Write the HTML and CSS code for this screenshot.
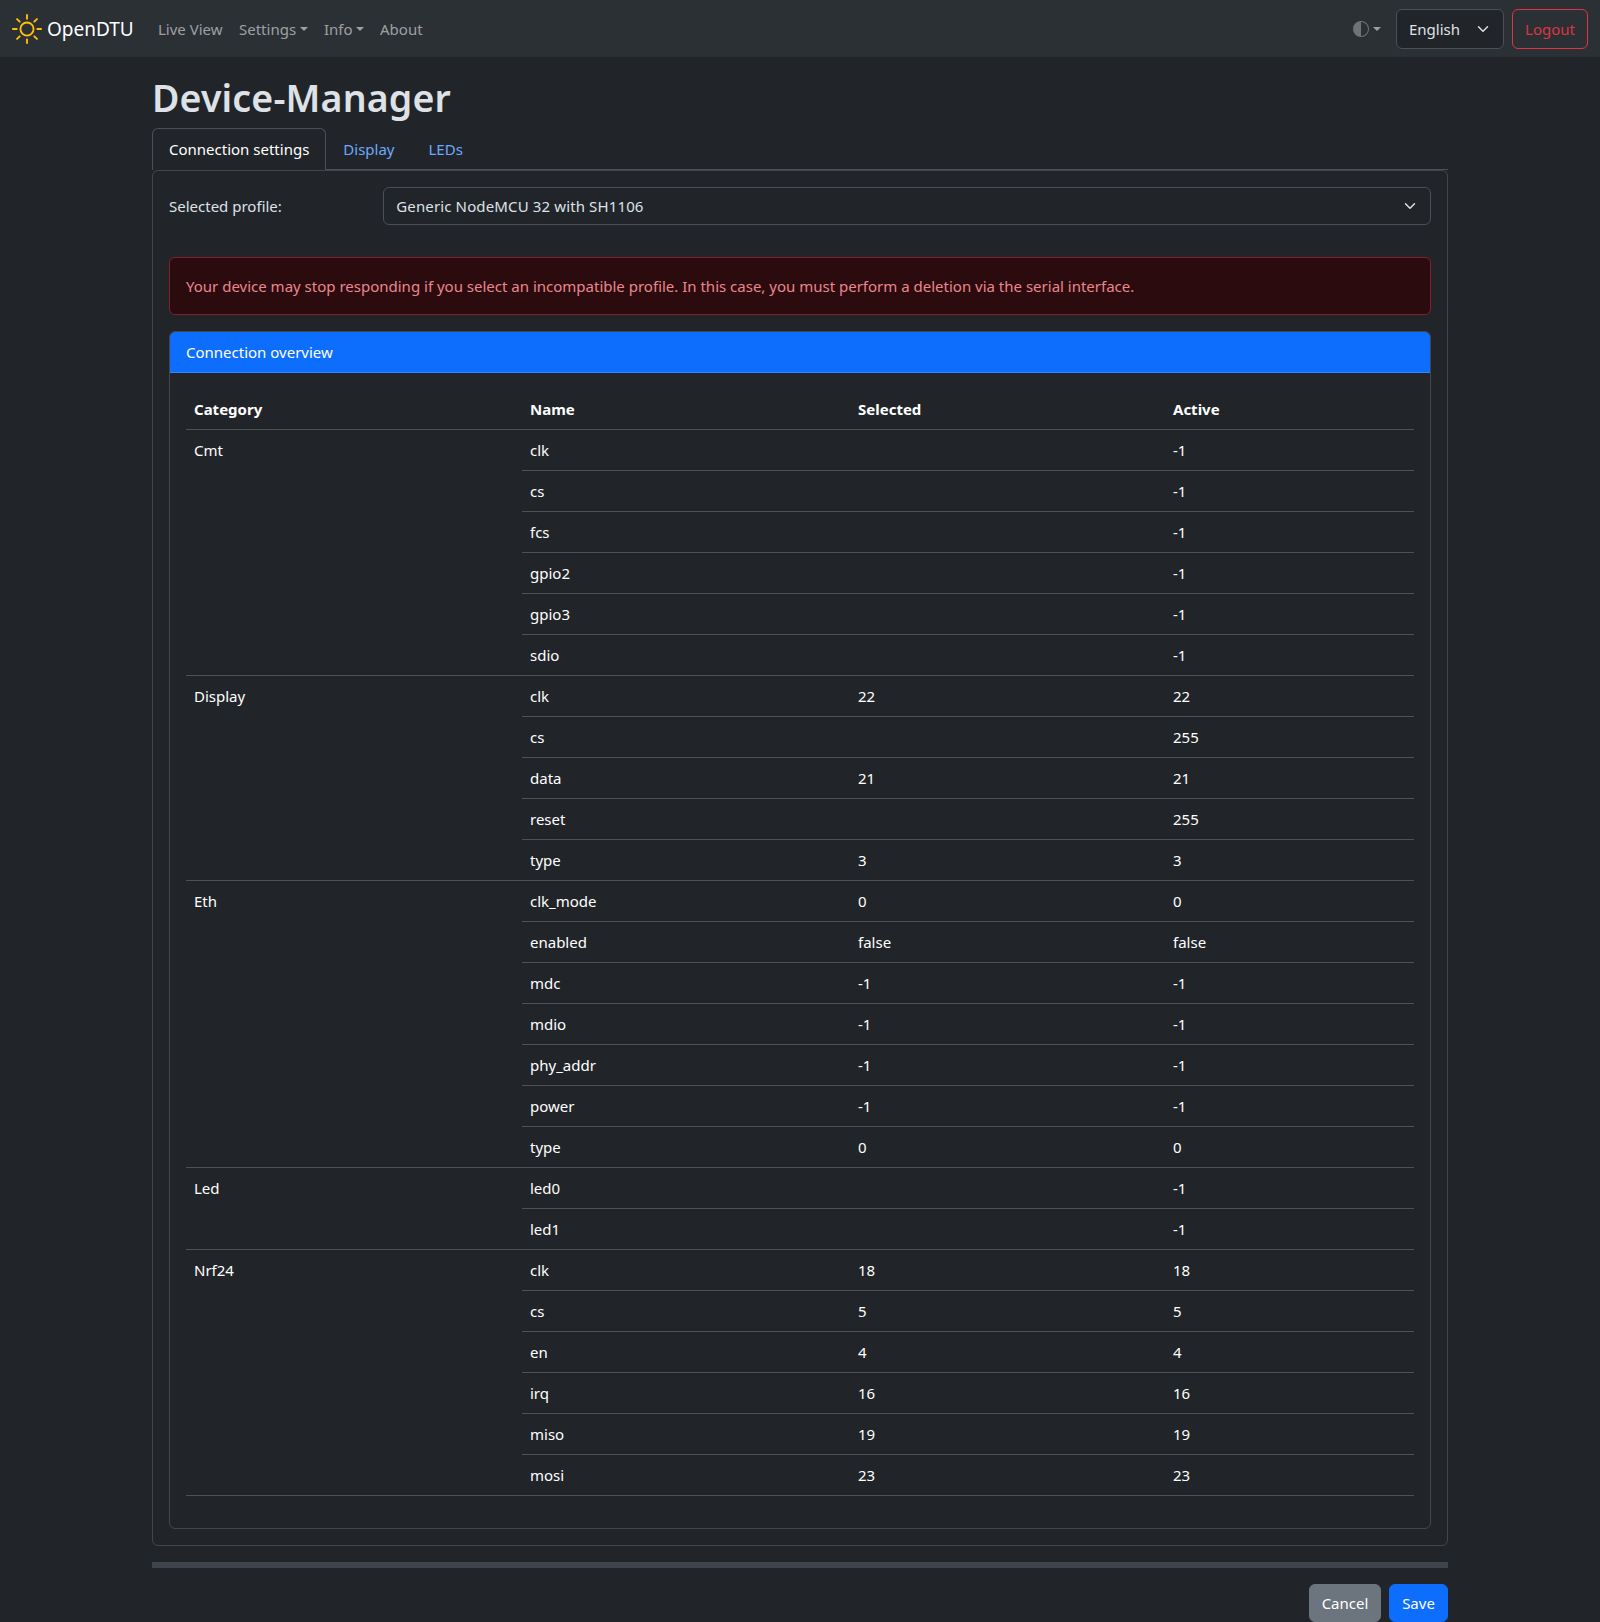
FILE: index.html
```html
<!DOCTYPE html>
<html lang="en">
<head>
<meta charset="utf-8">
<title>OpenDTU</title>
<link rel="stylesheet" href="styles.css">
</head>
<body>
<nav class="navbar">
  <a class="brand">
    <svg class="brand-icon" viewBox="0 0 16 16" width="30" height="30" fill="currentColor"><path d="M8 11a3 3 0 1 1 0-6 3 3 0 0 1 0 6m0 1a4 4 0 1 0 0-8 4 4 0 0 0 0 8M8 0a.5.5 0 0 1 .5.5v2a.5.5 0 0 1-1 0v-2A.5.5 0 0 1 8 0m0 13a.5.5 0 0 1 .5.5v2a.5.5 0 0 1-1 0v-2A.5.5 0 0 1 8 13m8-5a.5.5 0 0 1-.5.5h-2a.5.5 0 0 1 0-1h2a.5.5 0 0 1 .5.5M3 8a.5.5 0 0 1-.5.5h-2a.5.5 0 0 1 0-1h2A.5.5 0 0 1 3 8m10.657-5.657a.5.5 0 0 1 0 .707l-1.414 1.415a.5.5 0 1 1-.707-.708l1.414-1.414a.5.5 0 0 1 .707 0m-9.193 9.193a.5.5 0 0 1 0 .707L3.05 13.657a.5.5 0 0 1-.707-.707l1.414-1.414a.5.5 0 0 1 .707 0m9.193 2.121a.5.5 0 0 1-.707 0l-1.414-1.414a.5.5 0 0 1 .707-.707l1.414 1.414a.5.5 0 0 1 0 .707M4.464 4.465a.5.5 0 0 1-.707 0L2.343 3.05a.5.5 0 1 1 .707-.707l1.414 1.414a.5.5 0 0 1 0 .708"/></svg>
    <span class="brand-name">OpenDTU</span>
  </a>
  <div class="nav-links">
    <a class="nav-link live">Live View</a>
    <a class="nav-link settings caret">Settings</a>
    <a class="nav-link info caret">Info</a>
    <a class="nav-link">About</a>
  </div>
  <div class="nav-tools">
    <a class="theme caret"><svg viewBox="0 0 16 16" width="16" height="16" fill="currentColor"><path d="M8 15A7 7 0 1 0 8 1zm0 1A8 8 0 1 1 8 0a8 8 0 0 1 0 16"/></svg></a>
    <div class="select language"><span>English</span><svg class="chevron" viewBox="0 0 16 16" width="16" height="12"><path d="m2 5 6 6 6-6"/></svg></div>
    <button class="btn logout">Logout</button>
  </div>
</nav>
<main class="container">
  <h1>Device-Manager</h1>
  <div class="tabs">
    <a class="tab active">Connection settings</a>
    <a class="tab">Display</a>
    <a class="tab">LEDs</a>
  </div>
  <section class="card outer">
    <div class="profile-row">
      <label>Selected profile:</label>
      <div class="select profile"><span>Generic NodeMCU 32 with SH1106</span><svg class="chevron" viewBox="0 0 16 16" width="16" height="12"><path d="m2 5 6 6 6-6"/></svg></div>
    </div>
    <div class="alert">Your device may stop responding if you select an incompatible profile. In this case, you must perform a deletion via the serial interface.</div>
    <section class="card overview">
      <header class="card-header">Connection overview</header>
      <div class="card-body">
        <table>
          <colgroup><col class="col-category"><col class="col-name"><col class="col-selected"><col class="col-active"></colgroup>
          <thead><tr><th>Category</th><th>Name</th><th>Selected</th><th>Active</th></tr></thead>
          <tbody>
            <tr><td rowspan="6">Cmt</td><td>clk</td><td></td><td>-1</td></tr>
            <tr><td>cs</td><td></td><td>-1</td></tr>
            <tr><td>fcs</td><td></td><td>-1</td></tr>
            <tr><td>gpio2</td><td></td><td>-1</td></tr>
            <tr><td>gpio3</td><td></td><td>-1</td></tr>
            <tr><td>sdio</td><td></td><td>-1</td></tr>
            <tr><td rowspan="5">Display</td><td>clk</td><td>22</td><td>22</td></tr>
            <tr><td>cs</td><td></td><td>255</td></tr>
            <tr><td>data</td><td>21</td><td>21</td></tr>
            <tr><td>reset</td><td></td><td>255</td></tr>
            <tr><td>type</td><td>3</td><td>3</td></tr>
            <tr><td rowspan="7">Eth</td><td>clk_mode</td><td>0</td><td>0</td></tr>
            <tr><td>enabled</td><td>false</td><td>false</td></tr>
            <tr><td>mdc</td><td>-1</td><td>-1</td></tr>
            <tr><td>mdio</td><td>-1</td><td>-1</td></tr>
            <tr><td>phy_addr</td><td>-1</td><td>-1</td></tr>
            <tr><td>power</td><td>-1</td><td>-1</td></tr>
            <tr><td>type</td><td>0</td><td>0</td></tr>
            <tr><td rowspan="2">Led</td><td>led0</td><td></td><td>-1</td></tr>
            <tr><td>led1</td><td></td><td>-1</td></tr>
            <tr><td rowspan="6">Nrf24</td><td>clk</td><td>18</td><td>18</td></tr>
            <tr><td>cs</td><td>5</td><td>5</td></tr>
            <tr><td>en</td><td>4</td><td>4</td></tr>
            <tr><td>irq</td><td>16</td><td>16</td></tr>
            <tr><td>miso</td><td>19</td><td>19</td></tr>
            <tr><td>mosi</td><td>23</td><td>23</td></tr>
          </tbody>
        </table>
      </div>
    </section>
  </section>
  <div class="divider"></div>
  <div class="actions">
    <button class="btn cancel">Cancel</button>
    <button class="btn save">Save</button>
  </div>
</main>
</body>
</html>
```
FILE: styles.css
```css
* { box-sizing: border-box; }

body {
  margin: 0;
  background: #212529;
  color: #dee2e6;
  font: 15px/24px "Segoe UI", "Noto Sans", sans-serif;
}

.navbar {
  display: flex;
  align-items: center;
  height: 57px;
  padding: 1px 12px 0;
  background: #2b3035;
}

.brand {
  display: flex;
  align-items: center;
  gap: 5px;
  width: 122px;
  margin-right: 16px;
  color: #fff;
  font-size: 19px;
  line-height: 30px;
  white-space: nowrap;
}
.brand-icon { color: #ffc107; flex: none; }

.nav-links { display: flex; }
.nav-link { padding: 8px; color: rgba(255, 255, 255, 0.55); white-space: nowrap; }
.nav-link.live { width: 81px; }
.nav-link.settings { width: 85px; }
.nav-link.info { width: 56px; }

.caret { display: flex; align-items: center; }
.caret::after {
  content: "";
  margin-left: 4px;
  border: 4.8px solid transparent;
  border-top-color: currentColor;
  border-bottom: 0;
}
.nav-link.caret::after { margin: 0 0 1px auto; border-width: 4.4px 4px 0; }

.nav-tools { display: flex; align-items: center; margin-left: auto; }
.theme { margin-right: 15px; color: #6f7377; }
.theme::after { border-width: 4px 4px 0; color: #9c9fa1; }

.select {
  display: flex;
  align-items: center;
  justify-content: space-between;
  padding: 0 12px;
  border: 1px solid #495057;
  border-radius: 6px;
  background: #212529;
}
.chevron { fill: none; stroke: #dee2e6; stroke-width: 2; stroke-linecap: round; stroke-linejoin: round; }
.language { width: 108px; height: 40px; margin-right: 8px; }
.profile { flex: 1; height: 38px; letter-spacing: 0.13px; }

.btn {
  height: 38px;
  padding: 0;
  border: 1px solid transparent;
  border-radius: 6px;
  color: #fff;
  font: inherit;
}
.logout { width: 76px; height: 40px; border-color: #dc3545; background: none; color: #dc3545; }
.cancel { width: 72px; background: #6c757d; border-color: #6c757d; }
.save { width: 59px; background: #0d6efd; border-color: #0d6efd; }

.container { width: 1296px; margin: 0 auto; padding-top: 17px; }

h1 { margin: 0 0 6px; font-size: 37.5px; line-height: 48px; font-weight: 600; letter-spacing: 0.15px; }

.tabs { display: flex; height: 42px; border-bottom: 1px solid #495057; }
.tab {
  height: 42px;
  padding: 8px 16px;
  border: 1px solid transparent;
  border-bottom: 0;
  border-radius: 6px 6px 0 0;
  color: #6ea8fe;
}
.tab.active { border-color: #495057; background: #212529; color: #fff; }

.card { border: 1px solid #434649; border-radius: 6px; }
.outer { padding: 16px; }

.profile-row { display: flex; align-items: center; margin-bottom: 32px; }
.profile-row label { width: 214.3px; }

.alert {
  height: 58px;
  margin-bottom: 16px;
  padding: 16px;
  border: 1px solid #842029;
  border-radius: 6px;
  background: #2c0b0e;
  color: #ea868f;
}

.overview { overflow: hidden; }
.card-header { padding: 8px 16px; border-bottom: 1px solid #3583fd; background: #0d6efd; color: #fff; }
.card-body { padding: 16px 16px 32px; }

table { width: 1228px; table-layout: fixed; border-spacing: 0; color: #fff; }
.col-category { width: 336px; }
.col-name { width: 328px; }
.col-selected { width: 315px; }
.col-active { width: 249px; }
th, td { height: 41px; padding: 8px; border-bottom: 1px solid #4d5154; text-align: left; vertical-align: top; }
th { font-weight: 700; }

.divider { height: 6px; margin: 16px 0; background: #3d444b; }
.actions { display: flex; justify-content: flex-end; gap: 8px; }
```
